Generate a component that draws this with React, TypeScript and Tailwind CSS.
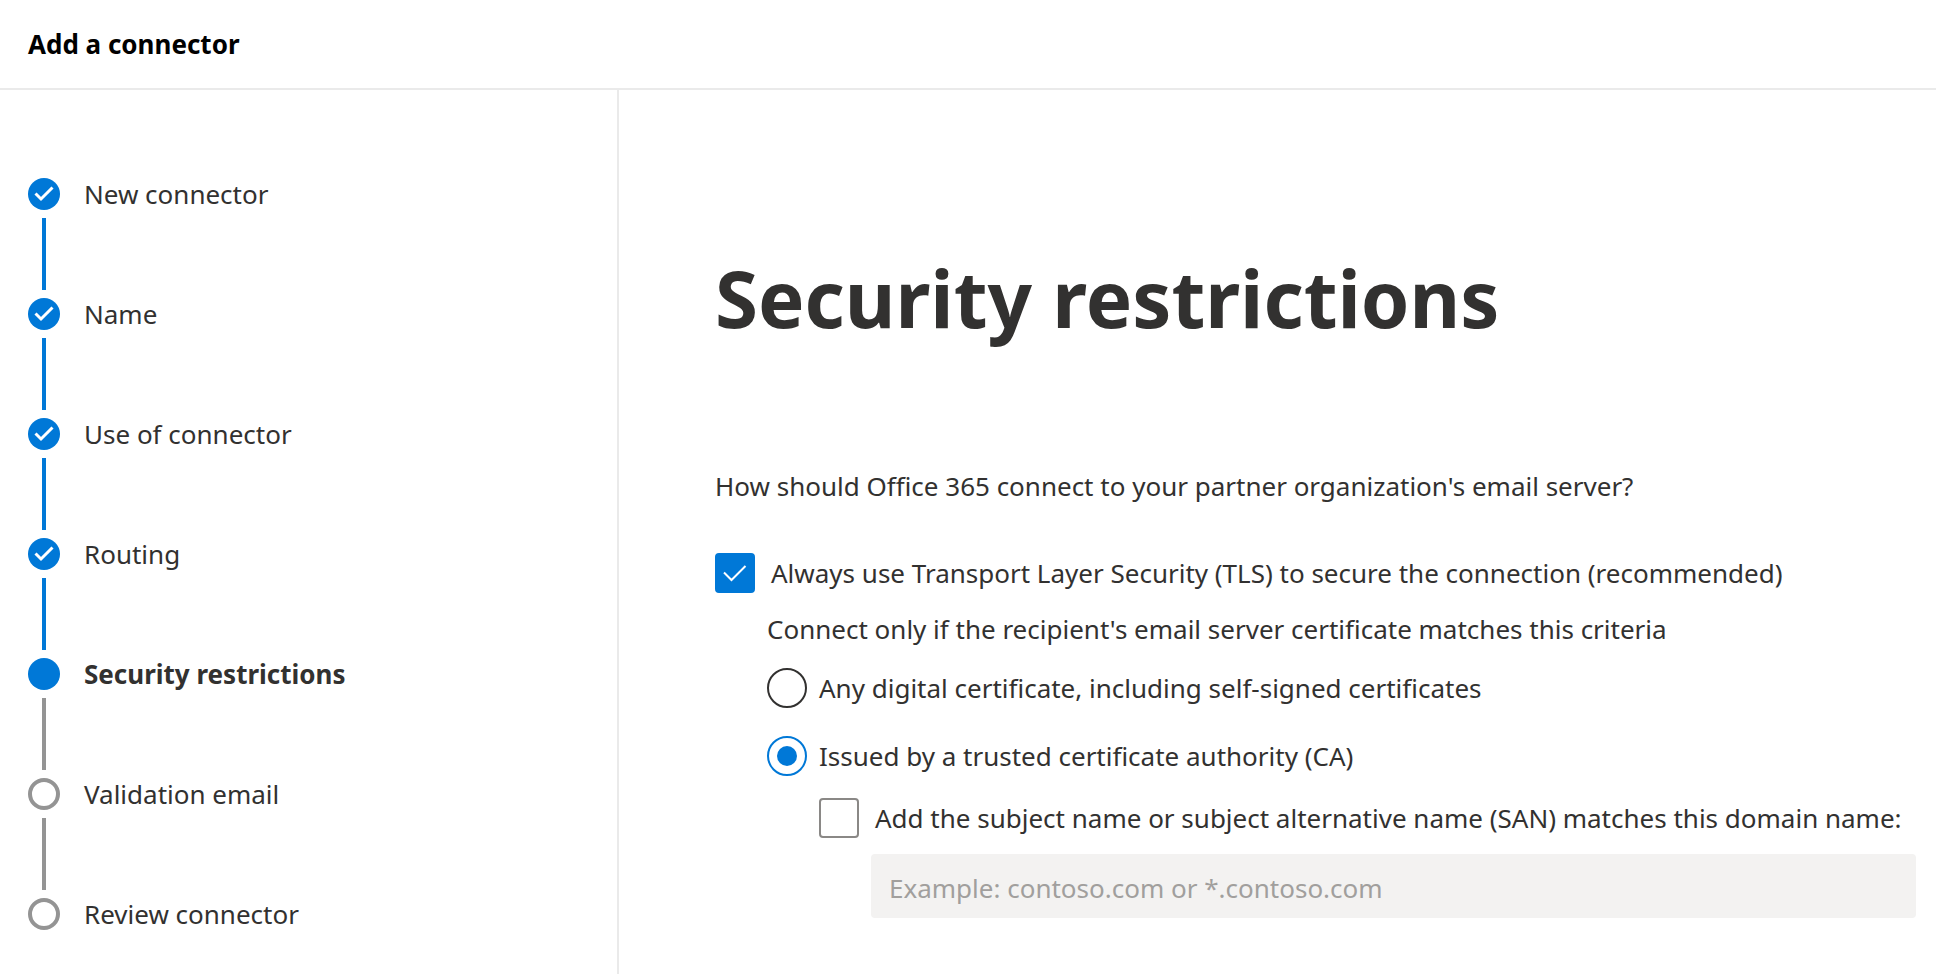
import { useState } from "react"
import clsx from "clsx"

type StepStatus = "done" | "current" | "upcoming"

const steps: { label: string; status: StepStatus }[] = [
  { label: "New connector", status: "done" },
  { label: "Name", status: "done" },
  { label: "Use of connector", status: "done" },
  { label: "Routing", status: "done" },
  { label: "Security restrictions", status: "current" },
  { label: "Validation email", status: "upcoming" },
  { label: "Review connector", status: "upcoming" },
]

function StepMarker({ status }: { status: StepStatus }) {
  if (status === "upcoming") {
    return <span className="size-8 rounded-full border-4 border-[#949494]" />
  }

  return (
    <span className="flex size-8 items-center justify-center rounded-full bg-[#0078d7]">
      {status === "done" && (
        <svg viewBox="0 0 32 32" className="size-8" fill="none" stroke="white" strokeWidth="3" aria-hidden="true">
          <path d="M7.5 15.5 L13 21 L24.5 9.5" />
        </svg>
      )}
    </span>
  )
}

function Steps() {
  return (
    <ol className="flex flex-col">
      {steps.map((step, i) => (
        <li key={step.label} className="flex gap-6" aria-current={step.status === "current" ? "step" : undefined}>
          <div className="flex flex-col items-center gap-2 pb-2">
            <StepMarker status={step.status} />
            {i < steps.length - 1 && (
              <span className={clsx("h-18 w-1", step.status === "done" ? "bg-[#0078d7]" : "bg-[#949494]")} />
            )}
          </div>
          <span className={clsx("-mt-1 leading-10", step.status === "current" && "font-bold")}>{step.label}</span>
        </li>
      ))}
    </ol>
  )
}

type CheckboxProps = { id: string; label: string; checked: boolean; onChange: (checked: boolean) => void }

function Checkbox({ id, label, checked, onChange }: CheckboxProps) {
  return (
    <div className="flex items-start gap-4">
      <span className="grid shrink-0">
        <input
          id={id}
          type="checkbox"
          checked={checked}
          onChange={(e) => onChange(e.target.checked)}
          className="col-start-1 row-start-1 size-10 appearance-none rounded-sm border-2 border-[#8a8886] bg-white checked:border-[#0078d7] checked:bg-[#0078d7]"
        />
        {checked && (
          <svg
            viewBox="0 0 40 40"
            className="pointer-events-none col-start-1 row-start-1 size-10"
            fill="none"
            stroke="white"
            strokeWidth="2"
            aria-hidden="true"
          >
            <path d="M9 19.5 L16.5 27 L30.5 13" />
          </svg>
        )}
      </span>
      <label htmlFor={id} className="leading-10">
        {label}
      </label>
    </div>
  )
}

type RadioProps = { id: string; label: string; checked: boolean; onChange: () => void }

function Radio({ id, label, checked, onChange }: RadioProps) {
  return (
    <div className="flex items-start gap-3">
      <span className="grid shrink-0 place-items-center">
        <input
          id={id}
          type="radio"
          name="certificate"
          checked={checked}
          onChange={onChange}
          className="col-start-1 row-start-1 size-10 appearance-none rounded-full border-2 border-[#323130] bg-white checked:border-[#0078d7]"
        />
        {checked && <span className="pointer-events-none col-start-1 row-start-1 size-5 rounded-full bg-[#0078d7]" />}
      </span>
      <label htmlFor={id} className="leading-10">
        {label}
      </label>
    </div>
  )
}

export default function App() {
  const [useTls, setUseTls] = useState(true)
  const [certificate, setCertificate] = useState("trusted")
  const [matchDomain, setMatchDomain] = useState(false)

  return (
    <div className="flex min-h-screen flex-col bg-white font-['Noto_Sans',sans-serif] text-[26px] text-[#323130]">
      <header className="border-b-2 border-[#eaeaea] px-7 py-6">
        <h2 className="leading-10 font-bold text-black">Add a connector</h2>
      </header>

      <div className="flex flex-1">
        <nav aria-label="Progress" className="w-[619px] shrink-0 border-r-2 border-[#eaeaea] px-7 pt-22">
          <Steps />
        </nav>

        <main className="flex-1 pt-38 pr-5 pl-24">
          <h1 className="text-[78px] leading-[112px] font-bold">Security restrictions</h1>
          <p className="mt-28 leading-10">How should Office 365 connect to your partner organization's email server?</p>

          <div className="mt-[47px]">
            <Checkbox
              id="tls"
              label="Always use Transport Layer Security (TLS) to secure the connection (recommended)"
              checked={useTls}
              onChange={setUseTls}
            />

            <fieldset className="mt-4 ml-13">
              <legend className="leading-10">
                Connect only if the recipient's email server certificate matches this criteria
              </legend>
              <div className="mt-[19px] flex flex-col gap-7">
                <Radio
                  id="any-certificate"
                  label="Any digital certificate, including self-signed certificates"
                  checked={certificate === "any"}
                  onChange={() => setCertificate("any")}
                />
                <Radio
                  id="trusted-certificate"
                  label="Issued by a trusted certificate authority (CA)"
                  checked={certificate === "trusted"}
                  onChange={() => setCertificate("trusted")}
                />
              </div>

              <div className="mt-[22px] ml-13">
                <Checkbox
                  id="match-domain"
                  label="Add the subject name or subject alternative name (SAN) matches this domain name:"
                  checked={matchDomain}
                  onChange={setMatchDomain}
                />
                <div className="mt-4 pl-13">
                  <input
                    type="text"
                    aria-label="Domain name"
                    disabled={!matchDomain}
                    placeholder="Example: contoso.com or *.contoso.com"
                    className="h-16 w-full rounded-sm bg-[#f3f2f1] px-[18px] pt-1 placeholder:text-[#a19f9d]"
                  />
                </div>
              </div>
            </fieldset>
          </div>
        </main>
      </div>
    </div>
  )
}
